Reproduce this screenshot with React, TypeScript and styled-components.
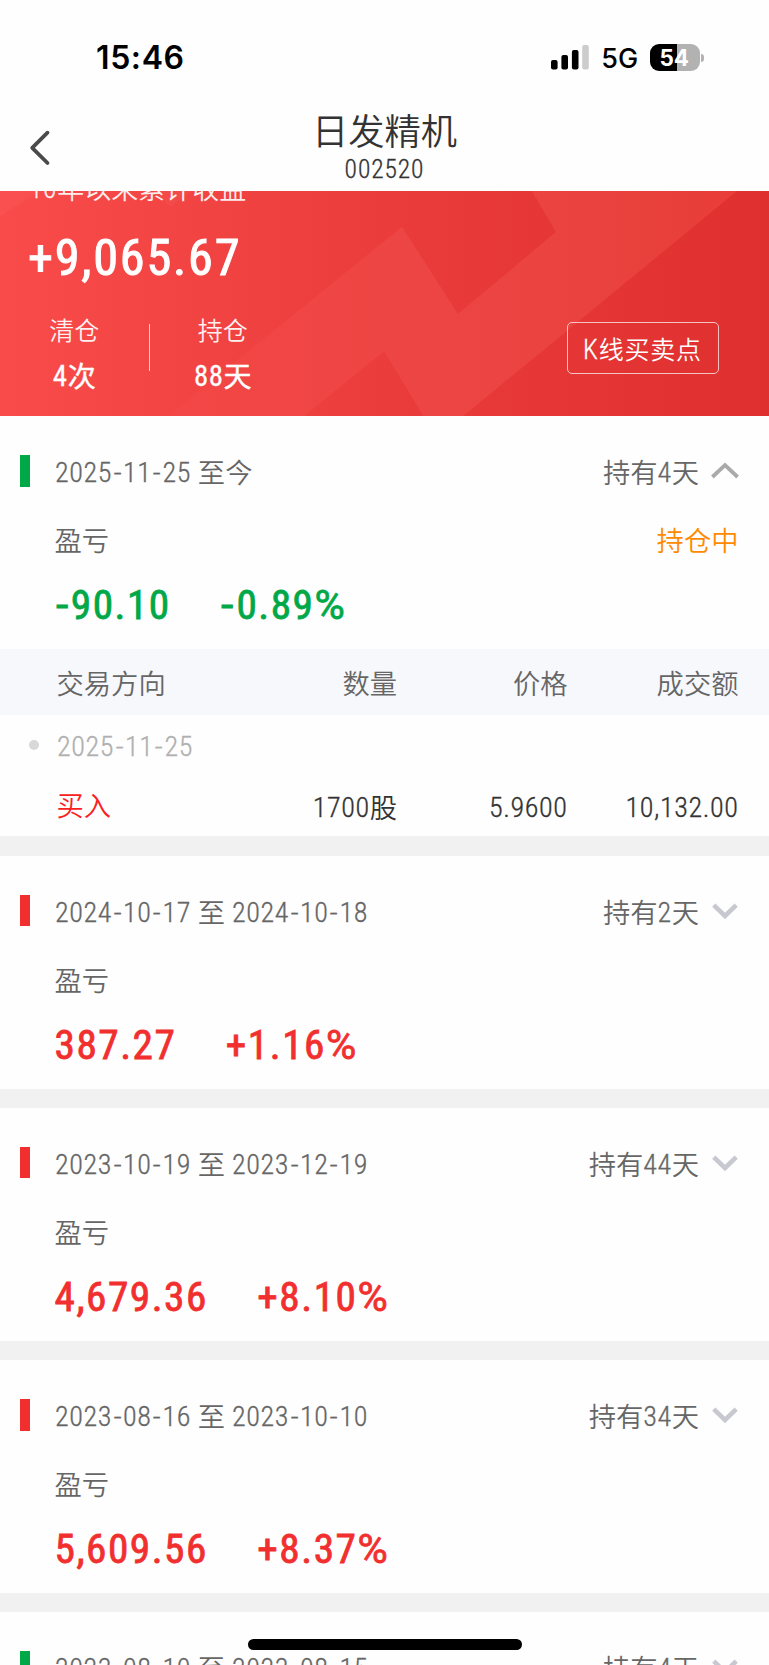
import React from "react";
import styled, { createGlobalStyle } from "styled-components";

const RED = "#f12f2f";
const GREEN = "#00a848";

const GlobalStyle = createGlobalStyle`
  * { box-sizing: border-box; }
  body {
    margin: 0;
    background: #fff;
    font-family: "Roboto Condensed", "Noto Sans CJK SC", sans-serif;
    font-size: 27.3px;
    font-weight: 350;
    color: #666;
  }
`;

const Screen = styled.div`
  position: relative;
  width: 769px;
  height: 1665px;
  overflow: hidden;
  background: #fefefe;
`;

/* ---------- text ---------- */

const Digits = styled.span`
  font-size: 1.03em;
  letter-spacing: 0.02em;
  vertical-align: 0.035em;
  -webkit-text-stroke: 0.3px currentColor;
`;

const Dash = styled.span`
  display: inline-block;
  margin: 0 1.9px;
  letter-spacing: 0;
  transform: scaleX(1.15);
`;

const Minus = styled.span`
  display: inline-block;
  margin: 0 4px 0 2px;
  letter-spacing: 0;
  transform: scaleX(1.25);
`;

const Percent = styled.span`
  font-family: Roboto, sans-serif;
  letter-spacing: 0;
`;

const Text = ({ children }: { children: string }) => (
  <>
    {children.split(/([0-9A-Za-z.,+%\- ]+)/).map((part, i) =>
      i % 2 ? (
        <Digits key={i}>
          {part.split(/(-)/).map((s, j) => (s === "-" ? <Dash key={j}>-</Dash> : s))}
        </Digits>
      ) : (
        part
      )
    )}
  </>
);

/* ---------- status bar and title ---------- */

const StatusBar = styled.div`
  display: flex;
  align-items: center;
  justify-content: space-between;
  height: 115px;
  padding: 0 65px 0 96px;
  font-family: Inter, sans-serif;
  color: #000;
`;

const Clock = styled.div`
  padding-top: 1px;
  font-size: 32px;
  font-weight: 600;
  line-height: 40px;
  letter-spacing: 0.6px;
`;

const StatusRight = styled.div`
  display: flex;
  align-items: center;
`;

const Network = styled.div`
  margin: 3px 12px 0 12.5px;
  font-size: 27px;
  font-weight: 450;
  line-height: 30px;
  letter-spacing: -0.1px;
`;

const Battery = styled.div`
  display: flex;
  align-items: center;
  justify-content: center;
  width: 49.5px;
  height: 27.5px;
  padding-right: 1px;
  border-radius: 9px;
  background: linear-gradient(90deg, #000 55%, #b2b2b2 55%);
  color: #fff;
  font-size: 22.5px;
  font-weight: 700;
  line-height: 27px;
`;

const BatteryTip = styled.div`
  width: 3px;
  height: 8px;
  margin-left: 1.5px;
  border-radius: 0 4px 4px 0;
  background: #b2b2b2;
`;

const TitleBar = styled.header`
  display: grid;
  grid-template-columns: 80px 1fr 80px;
  height: 76px;
`;

const BackButton = styled.button`
  display: flex;
  padding: 15px 0 0 29px;
  border: 0;
  background: none;
`;

const TitleBlock = styled.div`
  text-align: center;
  color: #333;
`;

const Title = styled.h1`
  margin: -2px 0 0;
  font-size: 36.3px;
  font-weight: 350;
  line-height: 40px;
`;

const Code = styled.div`
  margin-top: 1px;
  font-size: 25.5px;
  line-height: 30px;
  letter-spacing: 0.9px;
  -webkit-text-stroke: 0.3px currentColor;
`;

/* ---------- banner ---------- */

const Banner = styled.section`
  position: relative;
  height: 225.4px;
  overflow: hidden;
  background: linear-gradient(90deg, #fa4b4b 0%, #ea3b3b 55%, #df2f2f 100%);
  color: #fff;
`;

const Wave = styled.svg`
  position: absolute;
  inset: 0;
`;

const BannerBody = styled.div`
  position: relative;
`;

const BannerLabel = styled.div`
  height: 40px;
  margin: -22.3px 0 0 29px;
  font-size: 27px;
  line-height: 40px;
  opacity: 0.9;
`;

const Total = styled.div`
  height: 60px;
  margin: 19.5px 0 0 28px;
  font-size: 50.3px;
  font-weight: 400;
  letter-spacing: 1.8px;
  line-height: 60px;
  -webkit-text-stroke: 1px currentColor;
`;

const StatRow = styled.div`
  display: flex;
  align-items: flex-start;
  margin-top: 22.5px;
`;

const Stat = styled.div`
  width: 148.5px;
  text-align: center;
`;

const StatName = styled.div`
  height: 40px;
  padding-top: 1px;
  font-size: 25px;
  line-height: 40px;
  opacity: 0.92;
`;

const StatValue = styled.div`
  height: 40px;
  margin-top: 5px;
  font-size: 28px;
  font-weight: 400;
  line-height: 40px;
  -webkit-text-stroke: 0.4px currentColor;
`;

const StatDivider = styled.div`
  width: 1.5px;
  height: 47px;
  margin: 13px -1.5px 0 0;
  background: rgba(255, 255, 255, 0.75);
`;

const ChartButton = styled.button`
  width: 152px;
  height: 52px;
  margin: 11px 50.5px 0 auto;
  padding: 4px 0 0;
  border: 1.5px solid rgba(255, 255, 255, 0.7);
  border-radius: 5px;
  background: none;
  color: #fff;
  font: inherit;
  font-size: 25px;
  letter-spacing: 0.8px;
  line-height: 46px;
`;

const ButtonInitial = styled.span`
  font-size: 1.08em;
  -webkit-text-stroke: 0.3px currentColor;
`;

/* ---------- position cards ---------- */

const Card = styled.section`
  padding-top: 36.5px;
`;

const CardGap = styled.div`
  height: 19.5px;
  background: #f1f1f1;
`;

const Head = styled.div`
  display: flex;
  align-items: center;
  height: 40px;
  padding: 0 30px 0 20px;
  line-height: 40px;
`;

const Marker = styled.i<{ $color: string }>`
  width: 10px;
  height: 31.3px;
  margin: 0 25px 3.5px 0;
  background: ${(p) => p.$color};
`;

const Period = styled.div`
  padding-top: 1.5px;
`;

const Held = styled.div`
  margin: 0 12px 0 auto;
  padding-top: 1.5px;
`;

const Chevron = styled.svg`
  width: 28px;
  height: 20px;
  margin-bottom: 3px;
  fill: none;
`;

const Label = styled.div`
  display: flex;
  justify-content: space-between;
  height: 40px;
  margin-top: 28.5px;
  padding: 0.8px 30.5px 0 54.5px;
  line-height: 40px;
`;

const Holding = styled.span`
  color: #ff8a00;
`;

const Values = styled.div<{ $color: string }>`
  display: flex;
  gap: 49.5px;
  height: 48px;
  margin: 20px 0 19.6px;
  padding-left: 54.5px;
  color: ${(p) => p.$color};
  font-size: 41.3px;
  font-weight: 400;
  letter-spacing: 1.5px;
  line-height: 48px;
  -webkit-text-stroke: 0.8px currentColor;
`;

const TradeRow = styled.div<{ $h: number; $shift: number; $bg?: string; $color?: string }>`
  display: grid;
  grid-template-columns: 200px 140.5px 170.5px 171px;
  height: ${(p) => p.$h}px;
  padding: ${(p) => p.$shift}px 0 0 56.5px;
  background: ${(p) => p.$bg || "none"};
  color: ${(p) => p.$color || "#666"};
  line-height: ${(p) => p.$h - 2}px;
  & > :not(:first-child) { text-align: right; }
`;

const Buy = styled.span`
  color: #fa2020;
`;

const TradeDate = styled.div`
  display: flex;
  align-items: center;
  height: 62px;
  padding: 1.5px 0 0 29px;
  color: #b0b0b0;
  line-height: 60px;
  &::before {
    content: "";
    width: 10px;
    height: 10px;
    margin: 0 18px 3.5px 0;
    border-radius: 50%;
    background: #d8d8d8;
  }
`;

const HomeIndicator = styled.div`
  position: absolute;
  left: 247.5px;
  bottom: 15.5px;
  width: 274px;
  height: 10.3px;
  border-radius: 6px;
  background: #000;
`;

type Position = {
  period: string;
  held: string;
  profit: string;
  rate: string;
  gain: boolean;
};

const open: Position = { period: "2025-11-25 至今", held: "持有4天", profit: "-90.10", rate: "-0.89%", gain: false };

const closed: Position[] = [
  { period: "2024-10-17 至 2024-10-18", held: "持有2天", profit: "387.27", rate: "+1.16%", gain: true },
  { period: "2023-10-19 至 2023-12-19", held: "持有44天", profit: "4,679.36", rate: "+8.10%", gain: true },
  { period: "2023-08-16 至 2023-10-10", held: "持有34天", profit: "5,609.56", rate: "+8.37%", gain: true },
];

const Amount = ({ value }: { value: string }) => (
  <span>
    {value.startsWith("-") && <Minus>-</Minus>}
    {value.replace(/^-|%$/g, "")}
    {value.endsWith("%") && <Percent>%</Percent>}
  </span>
);

const PositionHead = ({ period, held, gain, expanded }: { period: string; held: string; gain: boolean; expanded?: boolean }) => (
  <Head>
    <Marker $color={gain ? RED : GREEN} />
    <Period><Text>{period}</Text></Period>
    <Held><Text>{held}</Text></Held>
    <Chevron viewBox="0 0 28 20">
      {expanded ? (
        <path d="M1.4 16 14 4 26.6 16" stroke="#aaa" strokeWidth="3.8" />
      ) : (
        <path d="M2.8 4.2 14 15 25.2 4.2" stroke="#c8c8d0" strokeWidth="4.6" />
      )}
    </Chevron>
  </Head>
);

const PositionCard = ({ item, expanded, children }: { item: Position; expanded?: boolean; children?: React.ReactNode }) => (
  <>
    <Card>
      <PositionHead period={item.period} held={item.held} gain={item.gain} expanded={expanded} />
      <Label>
        <span>盈亏</span>
        {expanded && <Holding>持仓中</Holding>}
      </Label>
      <Values $color={item.gain ? RED : GREEN}>
        <Amount value={item.profit} />
        <Amount value={item.rate} />
      </Values>
      {children}
    </Card>
    <CardGap />
  </>
);

export default function App() {
  return (
    <>
      <GlobalStyle />
      <Screen>
        <StatusBar>
          <Clock>15:46</Clock>
          <StatusRight>
            <svg width="38" height="25" viewBox="0 0 38 25">
              <rect x="0" y="15" width="6.6" height="9.4" rx="2" />
              <rect x="10.4" y="10" width="6.6" height="14.4" rx="2" />
              <rect x="20.9" y="5" width="6.6" height="19.4" rx="2" />
              <rect x="31.2" y="0" width="6.6" height="24.4" rx="2" fill="#ccc" />
            </svg>
            <Network>5G</Network>
            <Battery>54</Battery>
            <BatteryTip />
          </StatusRight>
        </StatusBar>
        <TitleBar>
          <BackButton aria-label="返回">
            <svg width="24" height="38" viewBox="0 0 24 38" fill="none" stroke="#4a4a4a" strokeWidth="3.8" strokeLinecap="round" strokeLinejoin="round">
              <path d="M18.5 2.7 3.2 17.8 18.5 33" />
            </svg>
          </BackButton>
          <TitleBlock>
            <Title>日发精机</Title>
            <Code>002520</Code>
          </TitleBlock>
        </TitleBar>

        <Banner>
          <Wave width="769" height="226" viewBox="0 0 769 226">
            <defs>
              <linearGradient id="shine" gradientUnits="userSpaceOnUse" x1="160" y1="0" x2="740" y2="0">
                <stop offset="0" stopColor="#ff8a7a" stopOpacity="0.02" />
                <stop offset="0.45" stopColor="#ff8a7a" stopOpacity="0.13" />
                <stop offset="1" stopColor="#ff6050" stopOpacity="0.27" />
              </linearGradient>
            </defs>
            <path fill="url(#shine)" d="M532 0 556 41 458 123 402 36 167 226H303L384 160 424 226H462L737 0Z" />
            <path fill="#fff" fillOpacity="0.03" d="M0 0H40L0 25ZM155 0 170 16 192 0Z" />
          </Wave>
          <BannerBody>
            <BannerLabel><Text>10年以来累计收益</Text></BannerLabel>
            <Total>+9,065.67</Total>
            <StatRow>
              <Stat>
                <StatName>清仓</StatName>
                <StatValue><Text>4次</Text></StatValue>
              </Stat>
              <StatDivider />
              <Stat>
                <StatName>持仓</StatName>
                <StatValue><Text>88天</Text></StatValue>
              </Stat>
              <ChartButton><ButtonInitial>K</ButtonInitial>线买卖点</ChartButton>
            </StatRow>
          </BannerBody>
        </Banner>

        <PositionCard item={open} expanded>
          <TradeRow $h={66} $shift={4} $bg="#f7f8fc">
            <span>交易方向</span>
            <span>数量</span>
            <span>价格</span>
            <span>成交额</span>
          </TradeRow>
          <TradeDate><Text>2025-11-25</Text></TradeDate>
          <TradeRow $h={59.5} $shift={2} $color="#333">
            <Buy>买入</Buy>
            <span><Text>1700股</Text></span>
            <span><Text>5.9600</Text></span>
            <span><Text>10,132.00</Text></span>
          </TradeRow>
        </PositionCard>
        {closed.map((item) => (
          <PositionCard key={item.period} item={item} />
        ))}
        <Card>
          <PositionHead period="2023-08-10 至 2023-08-15" held="持有4天" gain={false} />
        </Card>
        <HomeIndicator />
      </Screen>
    </>
  );
}
